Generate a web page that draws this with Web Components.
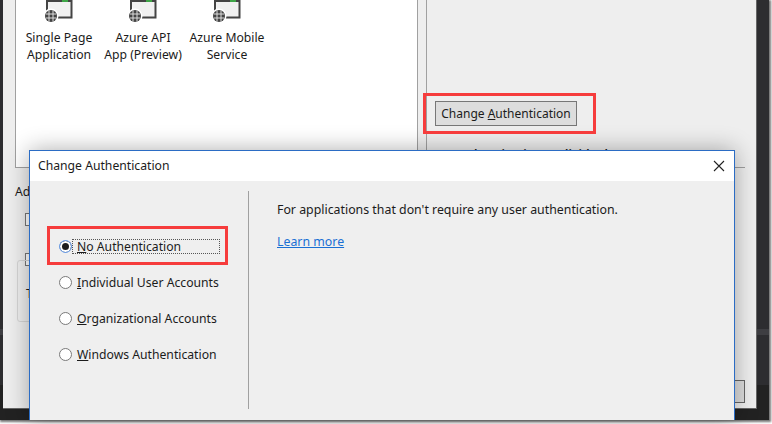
<!DOCTYPE html>
<html>
<head>
<meta charset="utf-8">
<style>
  html, body { margin: 0; height: 100%; background: #fff; overflow: hidden; }
  body { font: 12.2px "Noto Sans", "Open Sans", sans-serif; color: #1b1b1b; }
</style>
</head>
<body>
<shot-frame>
  <wizard-pane></wizard-pane>
  <auth-dialog></auth-dialog>
  <red-callout style="left:423px;top:93px;width:173px;height:41px"></red-callout>
  <red-callout style="left:47px;top:226px;width:181px;height:39px"></red-callout>
</shot-frame>

<script>
// dark desktop behind the dialogs, with the drop shadow of the screenshot itself
class ShotFrame extends HTMLElement {
  constructor() {
    super();
    this.attachShadow({mode: 'open'}).innerHTML = `
      <style>
        :host {
          display: block;
          position: relative;
          width: 769px;
          height: 420px;
          overflow: visible;
          padding-left: 3px;
          box-sizing: border-box;
          background: linear-gradient(#2d2d30 0 329px, #3e3e42 329px 335px, #2d2d30 335px 385px, #222 385px);
          box-shadow: 1px 1px 2px 1px rgba(0,0,0,.55);
        }
      </style>
      <slot></slot>`;
  }
}

class TemplateTile extends HTMLElement {
  constructor() {
    super();
    this.attachShadow({mode: 'open'}).innerHTML = `
      <style>
        :host {
          display: flex;
          flex-direction: column;
          align-items: center;
          width: 84px;
          text-align: center;
          line-height: 17px;
        }
        svg { display: block; margin-bottom: 5px; }
      </style>
      <svg width="32" height="24" viewBox="0 0 32 24">
        <path d="M4 1H29V18.500H8" fill="#f1f1f1"/>
        <path d="M4 12V1H28.500V17.500H14" fill="none" stroke="#444" stroke-width="2"/>
        <rect x="19" y="0" width="6" height="2" fill="#3fa648"/>
        <circle cx="8" cy="16" r="7.500" fill="#fff"/>
        <circle cx="8" cy="16" r="6" fill="#444"/>
        <path d="M3 14H13M3 18H13M6 10.500V21.500M10 10.500V21.500" stroke="#ddd" stroke-width="1" fill="none"/>
      </svg>
      <div><slot></slot></div>`;
  }
}

class WizardPane extends HTMLElement {
  constructor() {
    super();
    this.attachShadow({mode: 'open'}).innerHTML = `
      <style>
        :host {
          display: grid;
          grid-template-columns: 415px 1fr;
          width: 754px;
          height: 409px;
          box-sizing: border-box;
          background: #eee;
          border-bottom: 1px solid #666;
          border-right: 1px solid #666;
        }
        .left { padding-left: 12px; display: flex; flex-direction: column; }
        .panel {
          height: 167px;
          background: #fff;
          border: 1px solid #a0a0a0;
          border-top: 0;
          display: flex;
          padding-left: 1px;
        }
        .tiles { display: flex; }
        .ad { margin-top: 15px; height: 18px; line-height: 18px; }
        .check {
          width: 11px; height: 11px;
          margin: 12px 0 0 10px;
          border: 1px solid #777;
          background: #fff;
        }
        .check + .check { margin-top: 27px; }
        .group {
          margin: -6px 0 0 2px;
          width: 40px;
          height: 62px;
          box-sizing: border-box;
          border: 1px solid #d5d5d5;
          border-radius: 3px;
          padding: 25px 0 0 8px;
          line-height: 16px;
        }
        .right {
          margin-left: 8px;
          border-left: 1px solid #a0a0a0;
          display: flex;
          flex-direction: column;
          padding: 101px 11px 5px 8px;
        }
        .change {
          align-self: flex-start;
          font: 12px "Noto Sans", sans-serif;
          color: #1b1b1b;
          width: 142px;
          height: 25px;
          padding: 0;
          background: #ddd;
          border: 1px solid #777;
          white-space: nowrap;
        }
        .status { margin: 20px 0 0 18px; line-height: 17px; font-weight: 600; white-space: nowrap; }
        hr { border: 0; border-top: 1px solid #a0a0a0; margin: 4px 0 0; }
        .ok {
          margin-top: auto;
          align-self: flex-end;
          width: 100px;
          height: 23px;
          box-sizing: border-box;
          background: #ddd;
          border: 1px solid #666;
        }
      </style>
      <div class="left">
        <div class="panel">
          <div class="tiles">
            <template-tile>Single Page<br>Application</template-tile>
            <template-tile>Azure API<br>App (Preview)</template-tile>
            <template-tile>Azure Mobile<br>Service</template-tile>
          </div>
        </div>
        <div class="ad">Ad</div>
        <div class="check"></div>
        <div class="check"></div>
        <div class="group">T</div>
      </div>
      <div class="right">
        <button class="change">Change <u>A</u>uthentication</button>
        <div class="status">Authentication: Individual</div>
        <hr>
        <div class="ok"></div>
      </div>`;
  }
}

class RadioOption extends HTMLElement {
  constructor() {
    super();
    this.attachShadow({mode: 'open'}).innerHTML = `
      <style>
        :host {
          display: flex;
          align-items: center;
          height: 18px;
          white-space: nowrap;
        }
        .dot {
          width: 11px; height: 11px;
          flex: none;
          border: 1px solid #7a7a7a;
          border-radius: 50%;
          background: #fff;
          margin-right: 0;
        }
        :host([checked]) .dot { border-color: #6fa5f5; box-shadow: inset 0 0 0 2px #fff; background: #1c1c1c; }
        .label { flex: 1; height: 15px; line-height: 14px; padding-left: 4px; box-sizing: border-box; border: 1px dotted transparent; }
        :host([checked]) .label { border-color: #555; }
        u { text-underline-offset: 2px; }
      </style>
      <span class="dot"></span>
      <span class="label"><slot></slot></span>`;
  }
}

class AuthDialog extends HTMLElement {
  constructor() {
    super();
    this.attachShadow({mode: 'open'}).innerHTML = `
      <style>
        :host {
          display: flex;
          flex-direction: column;
          position: absolute;
          left: 29px;
          top: 150px;
          width: 706px;
          height: 270px;
          box-sizing: border-box;
          background: #efefef;
          border: 1px solid #2b6cc4;
          border-bottom: 0;
          box-shadow: 0 0 22px rgba(0,0,0,.32);
        }
        .title {
          display: flex;
          align-items: center;
          justify-content: space-between;
          height: 30px;
          box-sizing: border-box;
          flex: none;
          background: #fff;
          padding: 0 9px 2px 8px;
        }
        .title svg { margin-top: 2px; }
        .body { display: flex; flex: 1; padding: 10px 0 11px; }
        .choices {
          width: 219px;
          box-sizing: border-box;
          border-right: 1px solid #a0a0a0;
          padding: 46px 28px 0 29px;
          display: flex;
          flex-direction: column;
          gap: 18px;
        }
        .info { padding: 10px 0 0 28px; line-height: 18px; font-size: 12.35px; }
        .info a { display: block; margin-top: 14px; color: #1a6fd4; text-decoration: underline; }
      </style>
      <div class="title">
        <span>Change Authentication</span>
        <svg width="12" height="12" viewBox="0 0 12 12"><path d="M1 1L11 11M11 1L1 11" stroke="#222" stroke-width="1.100" fill="none"/></svg>
      </div>
      <div class="body">
        <div class="choices">
          <radio-option checked><u>N</u>o Authentication</radio-option>
          <radio-option><u>I</u>ndividual User Accounts</radio-option>
          <radio-option><u>O</u>rganizational Accounts</radio-option>
          <radio-option><u>W</u>indows Authentication</radio-option>
        </div>
        <div class="info">
          For applications that don't require any user authentication.
          <a>Learn more</a>
        </div>
      </div>`;
  }
}

// the red rectangles drawn over the screenshot
class RedCallout extends HTMLElement {
  constructor() {
    super();
    this.attachShadow({mode: 'open'}).innerHTML = `
      <style>
        :host {
          display: block;
          position: absolute;
          box-sizing: border-box;
          border: 3px solid #f63c3c;
        }
      </style>`;
  }
}

customElements.define('shot-frame', ShotFrame);
customElements.define('template-tile', TemplateTile);
customElements.define('wizard-pane', WizardPane);
customElements.define('radio-option', RadioOption);
customElements.define('auth-dialog', AuthDialog);
customElements.define('red-callout', RedCallout);
</script>
</body>
</html>
